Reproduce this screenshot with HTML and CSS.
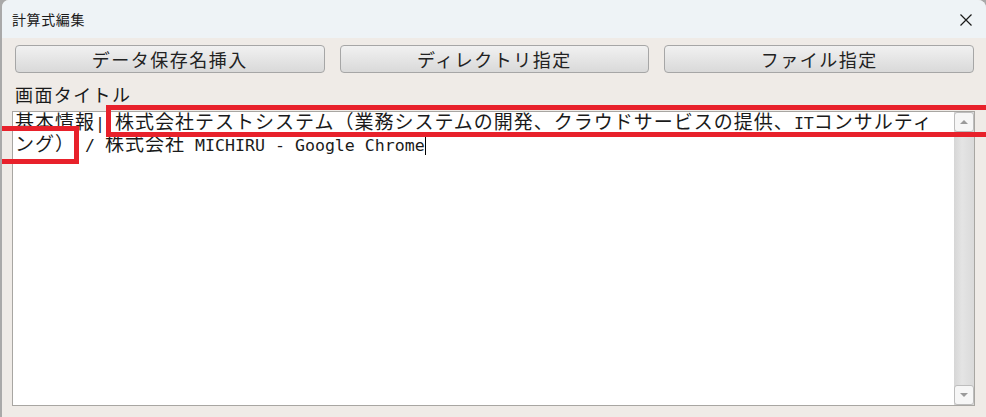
FILE: index.html
```html
<!DOCTYPE html>
<html lang="ja">
<head>
    <meta charset="UTF-8">
    <title>計算式編集</title>
    <link rel="stylesheet" href="styles.css">
</head>
<body>
    <div class="window">
        <!-- Title bar -->
        <div class="titlebar">
            <span class="title">計算式編集</span>
            <span class="close">
                <svg width="12" height="12" viewBox="0 0 12 12">
                    <path d="M0.5 0.5 L11.5 11.5 M11.5 0.5 L0.5 11.5" stroke="#1a1a1a" stroke-width="1.2" fill="none"/>
                </svg>
            </span>
        </div>

        <div class="content">
            <!-- Insert buttons -->
            <div class="toolbar">
                <button class="tool-btn">データ保存名挿入</button>
                <button class="tool-btn">ディレクトリ指定</button>
                <button class="tool-btn">ファイル指定</button>
            </div>

            <div class="field-label">画面タイトル</div>

            <!-- Formula editor -->
            <div class="editor">
                <div class="editor-text"><span class="w">基本情報</span>| <span class="w">株式会社テストシステム（業務システムの開発、クラウドサービスの提供、</span>IT<span class="w">コンサルティング）</span> / <span class="w">株式会社</span> MICHIRU - Google Chrome<span class="caret"></span></div>
                <div class="scrollbar">
                    <div class="sb-btn"><span class="arrow up"></span></div>
                    <div class="sb-track"></div>
                    <div class="sb-btn"><span class="arrow down"></span></div>
                </div>
            </div>
        </div>

        <!-- highlight frames -->
        <div class="mark mark-top"></div>
        <div class="mark mark-wrap"></div>
    </div>
</body>
</html>
```

FILE: styles.css
```css
html, body {
    margin: 0;
    height: 100%;
    overflow: hidden;
}
body {
    background-color: #a9a9a9;
    font-family: "Noto Sans CJK JP", "Noto Sans", sans-serif;
    color: #1e1e1e;
}
.window {
    position: relative;
    margin-left: 2px;
    height: 417px;
    background-color: #efebe7;
    border-radius: 7px 8px 0 0;
    overflow: hidden;
}
.titlebar {
    height: 38px;
    background-color: #eef3f6;
    display: flex;
    align-items: center;
    justify-content: space-between;
    padding: 0 14px 0 10px;
}
.title {
    font-size: 14px;
    letter-spacing: 0.6px;
    color: #1a1a1a;
}
.close {
    display: flex;
    margin-top: 2px;
}
.content {
    padding: 7px 11px 0 10px;
}
.toolbar {
    display: grid;
    grid-template-columns: 1fr 1fr 1fr;
    gap: 15px;
    padding: 0 1px 0 3px;
}
.tool-btn {
    height: 28px;
    padding: 0;
    font-family: "Noto Sans CJK JP", sans-serif;
    font-size: 18px;
    letter-spacing: 1.5px;
    line-height: 26px;
    color: #222;
    background: linear-gradient(#f1f1f1, #d9d9d9);
    border: 1px solid #a6a6a6;
    border-radius: 4px;
}
.field-label {
    margin-top: 8px;
    padding-left: 3px;
    font-size: 18px;
    letter-spacing: 1.4px;
    line-height: 26px;
    color: #1a1a1a;
}
.editor {
    margin-top: 4px;
    height: 293px;
    display: flex;
    background-color: #fff;
    border: 1px solid #a8a6a2;
}
.editor-text {
    flex: 1;
    padding: 1px 8px 0 2px;
    font-family: "DejaVu Sans Mono", "Noto Sans CJK JP", monospace;
    font-size: 16.6px;
    line-height: 22px;
    color: #1a1a1a;
    white-space: pre-wrap;
    word-break: break-all;
}
.editor-text .w {
    font-family: "Noto Sans CJK JP", sans-serif;
    font-size: 19px;
    letter-spacing: 1px;
    line-height: 16px;
}
.caret {
    display: inline-block;
    width: 1px;
    height: 18px;
    background-color: #000;
    vertical-align: -4px;
}
.scrollbar {
    width: 20px;
    display: flex;
    flex-direction: column;
    background: linear-gradient(to right, #d6d6d6, #e4e4e4 40%, #dadada);
}
.sb-btn {
    height: 20px;
    display: flex;
    align-items: center;
    justify-content: center;
    background-color: #f6f6f6;
    border: 1px solid #bdbdbd;
    border-radius: 3px;
    box-sizing: border-box;
}
.sb-track {
    flex: 1;
}
.arrow {
    width: 0;
    height: 0;
    border-left: 4px solid transparent;
    border-right: 4px solid transparent;
}
.arrow.up {
    border-bottom: 4px solid #9a9a9a;
}
.arrow.down {
    border-top: 4px solid #9a9a9a;
}
.mark {
    position: absolute;
    border: 5px solid #e8212b;
    box-sizing: border-box;
}
.mark-top {
    left: 104px;
    top: 105px;
    width: 900px;
    height: 32px;
}
.mark-wrap {
    left: -20px;
    top: 126px;
    width: 97px;
    height: 38px;
}
```
